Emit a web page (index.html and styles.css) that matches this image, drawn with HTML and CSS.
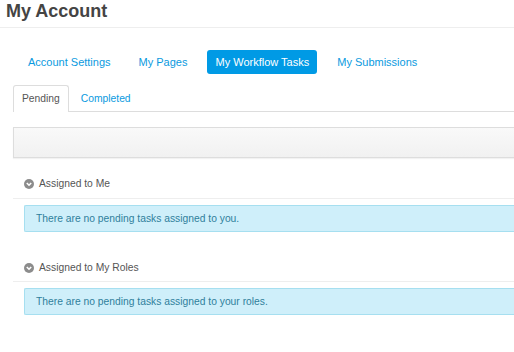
FILE: index.html
```html
<!DOCTYPE html>
<html>
<head>
<meta charset="utf-8">
<link rel="stylesheet" href="styles.css">
</head>
<body>
<header class="page-header">
  <h1 class="page-title">My Account</h1>
</header>
<nav class="nav-pills">
  <a class="pill" href="#">Account Settings</a>
  <a class="pill" href="#">My Pages</a>
  <a class="pill active" href="#">My Workflow Tasks</a>
  <a class="pill" href="#">My Submissions</a>
</nav>
<div class="content">
  <div class="tabs">
    <a class="tab active" href="#">Pending</a>
    <a class="tab" href="#">Completed</a>
  </div>
  <div class="toolbar"></div>
  <section class="panel">
    <div class="panel-head">
      <span class="chev"><svg width="10" height="10" viewBox="0 0 10 10"><circle cx="5" cy="5" r="5" fill="#8c8c8c"/><path d="M2.8 4 L5 6.2 L7.2 4" fill="none" stroke="#fff" stroke-width="1.6"/></svg></span>
      <span class="panel-title">Assigned to Me</span>
    </div>
    <div class="alert">There are no pending tasks assigned to you.</div>
  </section>
  <section class="panel">
    <div class="panel-head">
      <span class="chev"><svg width="10" height="10" viewBox="0 0 10 10"><circle cx="5" cy="5" r="5" fill="#8c8c8c"/><path d="M2.8 4 L5 6.2 L7.2 4" fill="none" stroke="#fff" stroke-width="1.6"/></svg></span>
      <span class="panel-title">Assigned to My Roles</span>
    </div>
    <div class="alert">There are no pending tasks assigned to your roles.</div>
  </section>
</div>
</body>
</html>
```
FILE: styles.css
```css
html, body {
  margin: 0;
  padding: 0;
  background: #fff;
  overflow: hidden;
}
body {
  font-family: "Liberation Sans", Arial, sans-serif;
  font-size: 10.3px;
  color: #555;
}
.page-header {
  height: 27px;
  border-bottom: 1px solid #eee;
}
.page-title {
  margin: 0;
  padding: 0 0 0 6px;
  font-size: 18px;
  line-height: 22px;
  font-weight: bold;
  color: #444;
}
.nav-pills {
  display: flex;
  gap: 12px;
  padding: 22px 0 0 20px;
  font-size: 11px;
}
.pill {
  display: block;
  height: 24px;
  line-height: 24px;
  padding: 0 8px;
  border-radius: 3px;
  color: #0a9ae0;
  text-decoration: none;
  white-space: nowrap;
}
.pill.active {
  background: #009ae5;
  color: #fff;
}
.content {
  margin-left: 13px;
}
.tabs {
  display: flex;
  margin-top: 11px;
  border-bottom: 1px solid #ddd;
  height: 26px;
}
.tab {
  display: block;
  height: 26px;
  line-height: 26px;
  padding: 0 8px;
  color: #0a9ae0;
  text-decoration: none;
  border: 1px solid transparent;
  border-bottom: none;
  border-radius: 3px 3px 0 0;
  box-sizing: border-box;
  margin-right: 3px;
}
.tab.active {
  color: #555;
  border-color: #ddd;
  background: #fff;
  height: 27px;
}
.toolbar {
  margin-top: 15px;
  height: 31px;
  box-sizing: border-box;
  border: 1px solid #ddd;
  border-right: none;
  background: linear-gradient(#f9f9f9, #f1f1f1);
  box-shadow: 0 1px 1px rgba(0,0,0,0.05);
}
.panel-head {
  display: flex;
  align-items: center;
  padding: 20px 0 8px 11px;
  border-bottom: 1px solid #eee;
}
.panel + .panel .panel-head {
  margin-top: 10px;
  padding-bottom: 7px;
}
.chev {
  display: flex;
  width: 10px;
  height: 10px;
  margin-right: 5px;
}
.panel-title {
  color: #555;
  line-height: 12px;
}
.alert {
  margin: 6px 0 0 11px;
  height: 27px;
  line-height: 25px;
  box-sizing: border-box;
  padding-left: 11px;
  background: #cfeffa;
  border: 1px solid #a6dff0;
  border-right: none;
  color: #2f7f9c;
  border-radius: 2px 0 0 2px;
}
```
